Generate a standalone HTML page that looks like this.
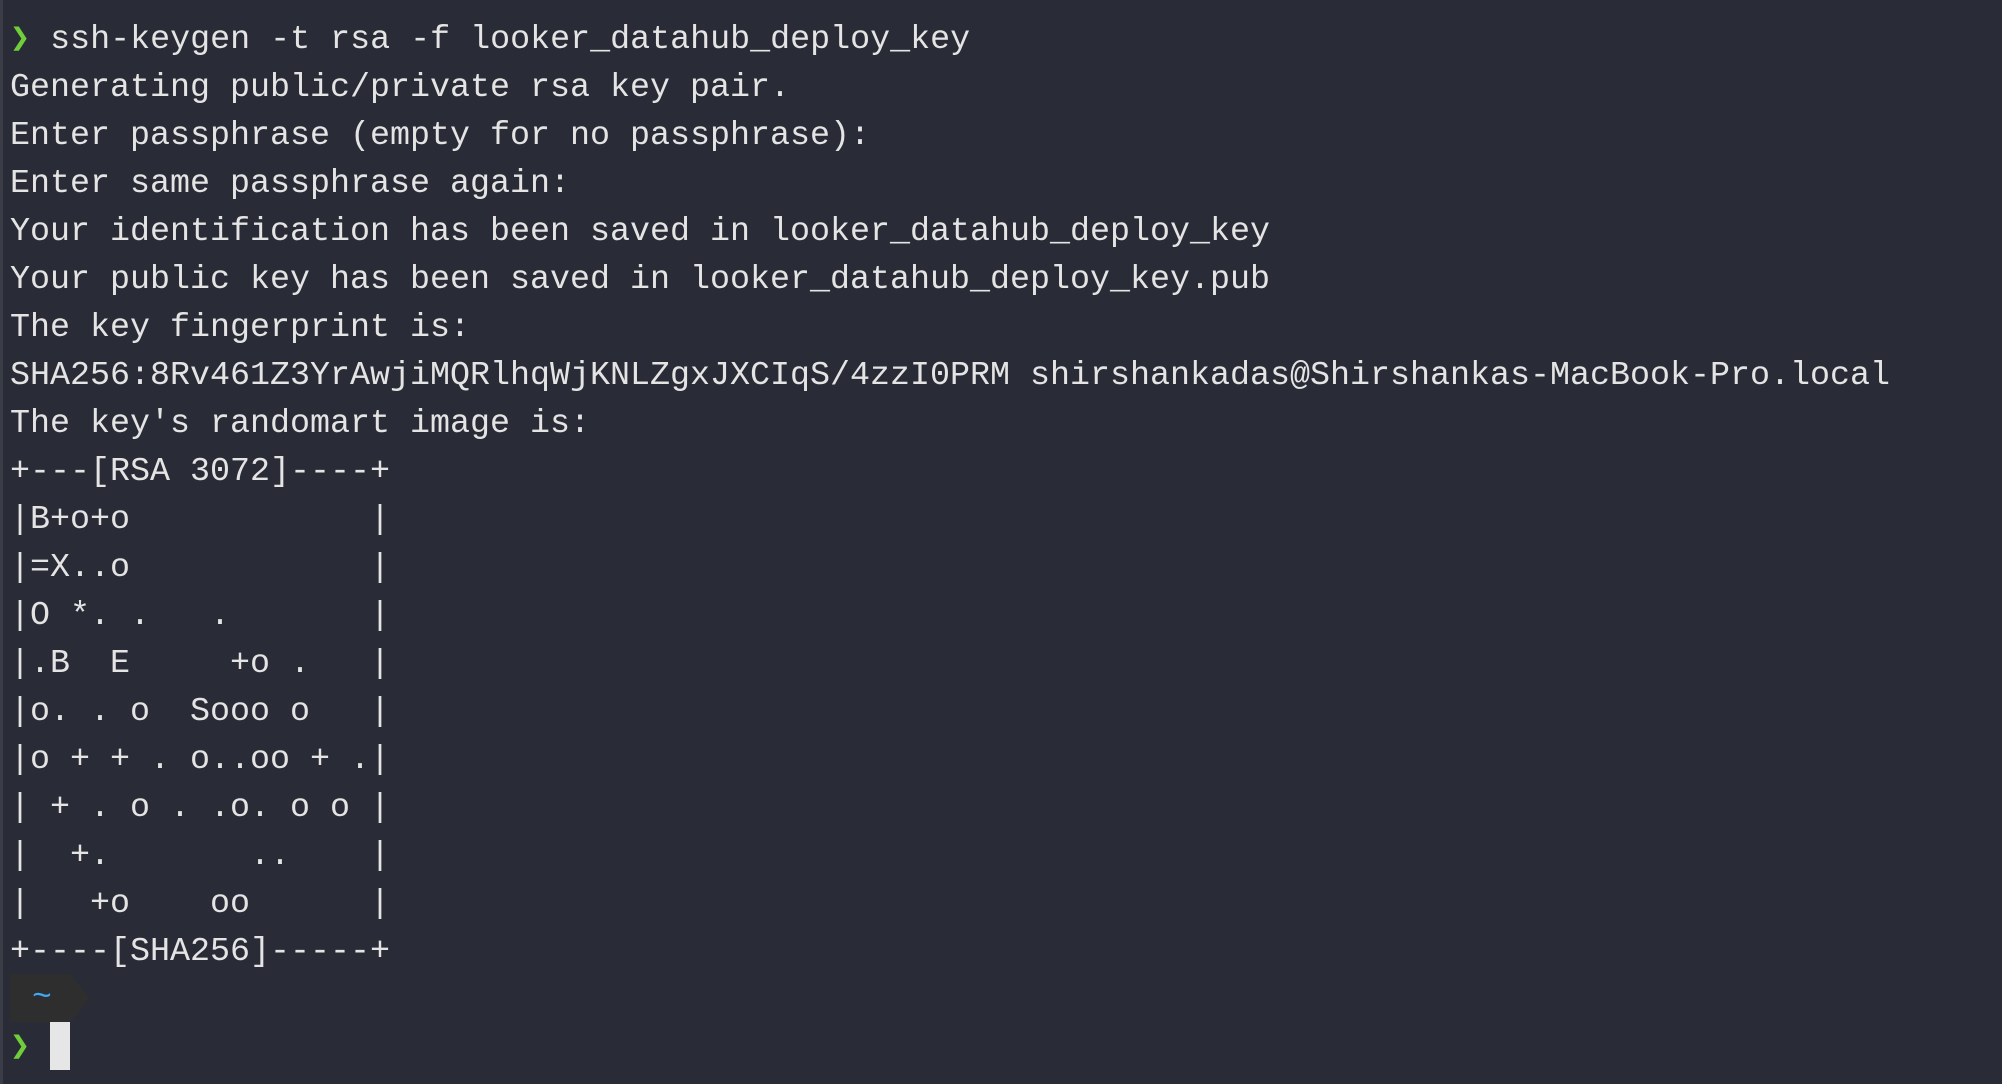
<!DOCTYPE html>
<html><head><meta charset="utf-8"><style>
html,body{margin:0;padding:0;width:2002px;height:1084px;overflow:hidden;background:#292b36;}
body{border-left:3px solid #3a3c46;box-sizing:border-box;}
pre{position:absolute;left:10px;top:16px;margin:0;font-family:"Liberation Mono","DejaVu Sans Mono",monospace;font-size:33.33px;line-height:48px;color:#e4e4e4;white-space:pre;}
.g{color:#6fcf3a;}
.box{position:absolute;left:10px;top:974px;width:60px;height:48px;background:#2e2e2e;}
.tip{position:absolute;left:70px;top:974px;width:0;height:0;border-top:24px solid transparent;border-bottom:24px solid transparent;border-left:20px solid #2e2e2e;}
.tl{position:absolute;left:32px;top:974px;font-family:"Liberation Mono",monospace;font-size:33px;line-height:48px;color:#3fa9f5;}
.cur{position:absolute;left:50px;top:1022px;width:20px;height:48px;background:#e6e6e6;}
</style></head><body>
<pre><span class="g">❯</span> ssh-keygen -t rsa -f looker_datahub_deploy_key
Generating public/private rsa key pair.
Enter passphrase (empty for no passphrase):
Enter same passphrase again:
Your identification has been saved in looker_datahub_deploy_key
Your public key has been saved in looker_datahub_deploy_key.pub
The key fingerprint is:
SHA256:8Rv461Z3YrAwjiMQRlhqWjKNLZgxJXCIqS/4zzI0PRM shirshankadas@Shirshankas-MacBook-Pro.local
The key's randomart image is:
+---[RSA 3072]----+
|B+o+o            |
|=X..o            |
|O *. .   .       |
|.B  E     +o .   |
|o. . o  Sooo o   |
|o + + . o..oo + .|
| + . o . .o. o o |
|  +.       ..    |
|   +o    oo      |
+----[SHA256]-----+

<span class="g">❯</span></pre>
<div class="box"></div><div class="tip"></div><div class="tl">~</div>
<div class="cur"></div>
</body></html>
